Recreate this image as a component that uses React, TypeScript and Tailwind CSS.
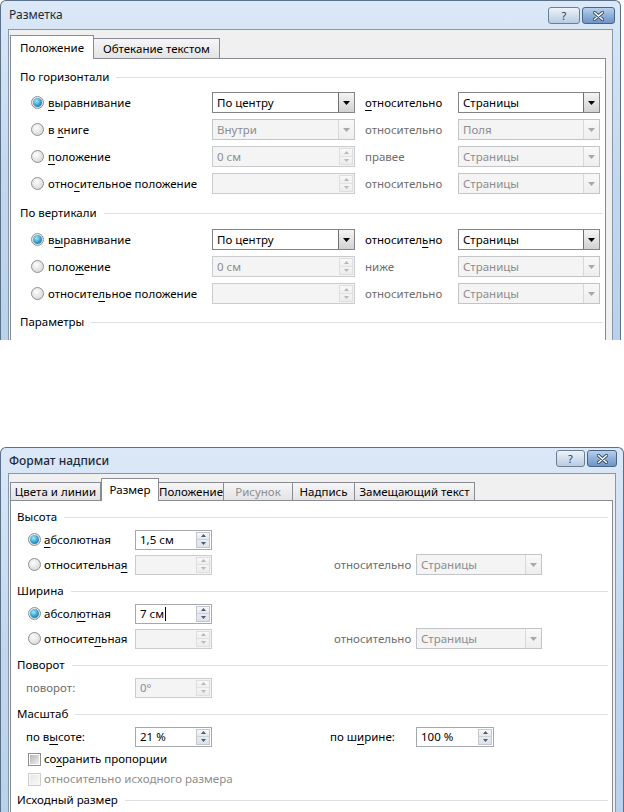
import React from "react";

type Tab = { label: string; w: string; active?: boolean; disabled?: boolean };

// "&" marks the mnemonic letter
function M({ t }: { t: string }) {
  const i = t.indexOf("&");
  if (i < 0) return <>{t}</>;
  return (
    <>
      {t.slice(0, i)}
      <span className="underline decoration-1 underline-offset-[3px]">{t[i + 1]}</span>
      {t.slice(i + 2)}
    </>
  );
}

function Radio({ on }: { on?: boolean }) {
  return (
    <span className="flex h-[13px] w-[13px] shrink-0 items-center justify-center rounded-full border border-[#8e8f8f] bg-[radial-gradient(circle_at_40%_35%,#fdfdfd,#cfcfcf)]">
      {on && (
        <span className="h-[9px] w-[9px] rounded-full bg-[radial-gradient(circle_at_40%_35%,#a6e6f8,#2c9ccb_55%,#0f5f8c)]" />
      )}
    </span>
  );
}

function Check({ disabled }: { disabled?: boolean }) {
  return (
    <span
      className={`flex h-[13px] w-[13px] shrink-0 items-center justify-center border ${
        disabled ? "border-[#cfcfcf] bg-[#f7f7f7]" : "border-[#8e8f8f] bg-white"
      }`}
    >
      <span
        className={`h-[9px] w-[9px] bg-gradient-to-br ${
          disabled ? "from-[#e8e8e8] to-[#f7f7f7]" : "from-[#b3b7bc] to-[#efefef]"
        }`}
      />
    </span>
  );
}

function Arrow({ up, color }: { up?: boolean; color: string }) {
  return (
    <svg width="5" height="3" viewBox="0 0 5 3">
      <path d={up ? "M0 3H5L2.5 0Z" : "M0 0H5L2.5 3Z"} fill={color} />
    </svg>
  );
}

function Combo({ value, w, disabled }: { value: string; w: string; disabled?: boolean }) {
  return (
    <div
      className={`flex h-[21px] ${w} shrink-0 border ${
        disabled ? "border-[#c2c4c7] bg-[#f4f4f4] text-[#8d8d8d]" : "border-[#848484] bg-white text-black"
      }`}
    >
      <span className="flex-1 truncate pl-[4px] leading-[19px]">{value}</span>
      <span
        className={`flex w-[16px] items-center justify-center border-l bg-gradient-to-b ${
          disabled ? "border-[#d8d8d8] from-[#f8f8f8] to-[#eeeeee]" : "border-[#707070] from-[#f4f4f4] to-[#d2d2d2]"
        }`}
      >
        <svg width="7" height="4" viewBox="0 0 7 4">
          <path d="M0 0H7L3.5 4Z" fill={disabled ? "#a8a8a8" : "#000"} />
        </svg>
      </span>
    </div>
  );
}

function Spin({
  value,
  w,
  h,
  disabled,
  caret,
}: {
  value: string;
  w: string;
  h: string;
  disabled?: boolean;
  caret?: boolean;
}) {
  return (
    <div
      className={`flex ${h} ${w} shrink-0 border ${
        disabled ? "border-[#c9cbce] bg-[#f4f4f4] text-[#8d8d8d]" : "border-[#a5a8ad] bg-white text-black"
      }`}
    >
      <span className="flex flex-1 items-center pl-[4px]">
        {value}
        {caret && <span className="ml-px h-[14px] w-px bg-black" />}
      </span>
      <span className={`my-px mr-px flex w-[14px] flex-col border ${disabled ? "border-[#dedede]" : "border-[#c3c7cd]"}`}>
        <span
          className={`flex flex-1 items-center justify-center border-b bg-gradient-to-b ${
            disabled ? "border-[#e2e2e2] from-[#f9f9f9] to-[#efefef]" : "border-[#ccd1d8] from-[#f7f9fb] to-[#e3e8ee]"
          }`}
        >
          <Arrow up color={disabled ? "#b8b8b8" : "#4c5b73"} />
        </span>
        <span
          className={`flex flex-1 items-center justify-center bg-gradient-to-b ${
            disabled ? "from-[#f4f4f4] to-[#ececec]" : "from-[#e8ecf1] to-[#dde3ea]"
          }`}
        >
          <Arrow color={disabled ? "#b8b8b8" : "#4c5b73"} />
        </span>
      </span>
    </div>
  );
}

function Group({ label, className = "", pr }: { label: string; className?: string; pr: string }) {
  return (
    <div className={`flex h-4 items-center ${pr} ${className}`}>
      <span>{label}</span>
      <span className="ml-[7px] h-px flex-1 bg-[#dcdfe3]" />
    </div>
  );
}

function CaptionButtons({ helpW, closeW, wrap }: { helpW: string; closeW: string; wrap: string }) {
  return (
    <div className={`flex gap-[2px] ${wrap}`}>
      <div
        className={`flex h-[17px] ${helpW} items-center justify-center rounded-[3px] border border-[#6c7e96] bg-gradient-to-b from-[#eef3f9] via-[#d3dfee] to-[#b9cbe2] text-[11px] leading-none text-[#2b3a4e]`}
      >
        ?
      </div>
      <div
        className={`flex h-[17px] ${closeW} items-center justify-center rounded-[3px] border border-[#4a6486] bg-gradient-to-b from-[#b9d0ec] via-[#8fb0da] to-[#6e95c6]`}
      >
        <svg width="11" height="10" viewBox="0 0 11 10">
          <path d="M1.5 1.5L9.5 8.5M9.5 1.5L1.5 8.5" stroke="#2f4766" strokeWidth="3.2" strokeLinecap="round" />
          <path d="M1.5 1.5L9.5 8.5M9.5 1.5L1.5 8.5" stroke="#ffffff" strokeWidth="1.6" strokeLinecap="round" />
        </svg>
      </div>
    </div>
  );
}

function Tabs({ tabs, activeH, idleH }: { tabs: Tab[]; activeH: string; idleH: string }) {
  return (
    <div className="flex items-end">
      {tabs.map((t) => (
        <div
          key={t.label}
          className={`flex ${t.w} shrink-0 items-center justify-center border-x border-t border-[#898c95] ${
            t.active
              ? `relative z-10 -mb-px ${activeH} bg-white`
              : `${idleH} -ml-px bg-gradient-to-b from-[#f6f6f6] to-[#e3e3e3] first:ml-0`
          } ${t.disabled ? "text-[#8d8d8d]" : "text-black"}`}
        >
          {t.label}
        </div>
      ))}
    </div>
  );
}

function Frame({
  title,
  size,
  bar,
  titleCls,
  buttons,
  clientCls,
  tabs,
  children,
}: {
  title: string;
  size: string;
  bar: string;
  titleCls: string;
  buttons: React.ReactNode;
  clientCls: string;
  tabs: React.ReactNode;
  children: React.ReactNode;
}) {
  return (
    <div
      className={`flex ${size} flex-col overflow-hidden rounded-t-[6px] border border-b-0 border-[#5b7089] bg-gradient-to-b from-[#dbe8f7] via-[#c3d8ef] to-[#b9d1eb] px-[7px]`}
    >
      <div className={`flex ${bar} shrink-0 items-start justify-between`}>
        <span className={`self-center pl-px text-[12px] text-[#1c2a3c] ${titleCls}`}>{title}</span>
        {buttons}
      </div>
      <div className={`flex flex-1 flex-col border border-b-0 border-[#8797ad] bg-[#f0f0f0] pl-px ${clientCls}`}>
        {tabs}
        <div className="flex flex-1 flex-col border-x border-t border-[#898c95] bg-white">{children}</div>
      </div>
    </div>
  );
}

const grayLbl = "text-[#6d6d6d]";

function PosRow({
  on,
  label,
  v1,
  spin,
  rel,
  relMn,
  v2,
  disabled,
}: {
  on?: boolean;
  label: string;
  v1: string;
  spin?: boolean;
  rel: string;
  relMn?: boolean;
  v2: string;
  disabled?: boolean;
}) {
  return (
    <div className="flex h-[27px] items-center pl-[20px]">
      <div className="flex w-[181px] shrink-0 items-center">
        <Radio on={on} />
        <span className="ml-[4px]">
          <M t={label} />
        </span>
      </div>
      {spin ? (
        <Spin value={v1} w="w-[143px]" h="h-[21px]" disabled={disabled} />
      ) : (
        <Combo value={v1} w="w-[143px]" disabled={disabled} />
      )}
      <span className={`w-[103px] shrink-0 pl-[10px] ${disabled ? grayLbl : "text-black"}`}>
        {relMn ? <M t={rel} /> : rel}
      </span>
      <Combo value={v2} w="w-[142px]" disabled={disabled} />
    </div>
  );
}

function Layout() {
  return (
    <Frame
      title="Разметка"
      size="h-[340px] w-[621px]"
      bar="h-[28px]"
      titleCls=""
      buttons={<CaptionButtons helpW="w-[32px]" closeW="w-[33px]" wrap="mt-[6px] -mr-[2px]" />}
      clientCls="pt-[5px] pr-[6px]"
      tabs={
        <Tabs
          activeH="h-[24px]"
          idleH="h-[20px]"
          tabs={[
            { label: "Положение", w: "w-[84px]", active: true },
            { label: "Обтекание текстом", w: "w-[127px]" },
          ]}
        />
      }
    >
      <div className="flex flex-col pt-[10px]">
        <Group label="По горизонтали" className="pl-[9px]" pr="pr-[2px]" />
        <div className="mt-[4px]">
          <PosRow on label="&выравнивание" v1="По центру" rel="&относительно" relMn v2="Страницы" />
          <PosRow label="в &книге" v1="Внутри" rel="относительно" v2="Поля" disabled />
          <PosRow label="&положение" spin v1="0 см" rel="правее" v2="Страницы" disabled />
          <PosRow label="отно&сительное положение" spin v1="" rel="относительно" v2="Страницы" disabled />
        </div>
        <Group label="По вертикали" className="mt-[8px] pl-[9px]" pr="pr-[2px]" />
        <div className="mt-[5px]">
          <PosRow on label="в&ыравнивание" v1="По центру" rel="относител&ьно" relMn v2="Страницы" />
          <PosRow label="поло&жение" spin v1="0 см" rel="ниже" v2="Страницы" disabled />
          <PosRow label="относите&льное положение" spin v1="" rel="относительно" v2="Страницы" disabled />
        </div>
        <Group label="Параметры" className="mt-[7px] pl-[9px]" pr="pr-[2px]" />
      </div>
    </Frame>
  );
}

function SizeRow({
  on,
  label,
  value,
  disabled,
  caret,
  rel,
}: {
  on?: boolean;
  label: string;
  value: string;
  disabled?: boolean;
  caret?: boolean;
  rel?: boolean;
}) {
  return (
    <div className="flex h-[25px] items-center pl-[17px]">
      <div className="flex w-[107px] shrink-0 items-center">
        <Radio on={on} />
        <span className="ml-[3px]">
          <M t={label} />
        </span>
      </div>
      <Spin value={value} w="w-[77px]" h="h-[20px]" disabled={disabled} caret={caret} />
      {rel && (
        <>
          <span className={`ml-[122px] w-[82px] shrink-0 ${grayLbl}`}>относительно</span>
          <Combo value="Страницы" w="w-[126px]" disabled />
        </>
      )}
    </div>
  );
}

function TextBoxFormat() {
  return (
    <Frame
      title="Формат надписи"
      size="mt-[107px] h-[365px] w-[624px]"
      bar="h-[25px]"
      titleCls="font-medium"
      buttons={<CaptionButtons helpW="w-[29px]" closeW="w-[30px]" wrap="mt-[2px] -mr-[1px]" />}
      clientCls="pt-[4px] pr-[2px]"
      tabs={
        <Tabs
          activeH="h-[23px]"
          idleH="h-[18px]"
          tabs={[
            { label: "Цвета и линии", w: "w-[91px]" },
            { label: "Размер", w: "w-[58px]", active: true },
            { label: "Положение", w: "w-[66px]" },
            { label: "Рисунок", w: "w-[70px]", disabled: true },
            { label: "Надпись", w: "w-[63px]" },
            { label: "Замещающий текст", w: "w-[121px]" },
          ]}
        />
      }
    >
      <div className="flex flex-col pt-[8px]">
        <Group label="Высота" className="pl-[6px]" pr="pr-[4px]" />
        <div className="mt-[2px]">
          <SizeRow on label="&абсолютная" value="1,5 см" />
          <SizeRow label="относительна&я" value="" disabled rel />
        </div>
        <Group label="Ширина" className="mt-[6px] pl-[6px]" pr="pr-[4px]" />
        <div className="mt-[2px]">
          <SizeRow on label="абсол&ютная" value="7 см" caret />
          <SizeRow label="относите&льная" value="" disabled rel />
        </div>
        <Group label="Поворот" className="mt-[6px] pl-[6px]" pr="pr-[4px]" />
        <div className="mt-[2px] flex h-[25px] items-center pl-[15px]">
          <span className={`w-[109px] shrink-0 ${grayLbl}`}>поворот:</span>
          <Spin value="0°" w="w-[77px]" h="h-[20px]" disabled />
        </div>
        <Group label="Масштаб" className="mt-[6px] pl-[6px]" pr="pr-[4px]" />
        <div className="mt-[2px] flex h-[25px] items-center pl-[15px]">
          <span className="w-[109px] shrink-0">
            <M t="по в&ысоте:" />
          </span>
          <Spin value="21 %" w="w-[77px]" h="h-[20px]" />
          <span className="ml-[118px] w-[86px] shrink-0">
            <M t="по ш&ирине:" />
          </span>
          <Spin value="100 %" w="w-[78px]" h="h-[20px]" />
        </div>
        <div className="flex h-[20px] items-center pl-[17px]">
          <Check />
          <span className="ml-[3px]">
            <M t="со&хранить пропорции" />
          </span>
        </div>
        <div className="flex h-[20px] items-center pl-[17px]">
          <Check disabled />
          <span className="ml-[3px] text-[#8d8d8d]">относительно исходного размера</span>
        </div>
        <Group label="Исходный размер" className="mt-[3px] pl-[6px]" pr="pr-[4px]" />
      </div>
    </Frame>
  );
}

export default function App() {
  return (
    <div className="h-[812px] w-[624px] overflow-hidden bg-white font-['Noto_Sans',sans-serif] text-[11.5px] leading-4 text-black">
      <Layout />
      <TextBoxFormat />
    </div>
  );
}
